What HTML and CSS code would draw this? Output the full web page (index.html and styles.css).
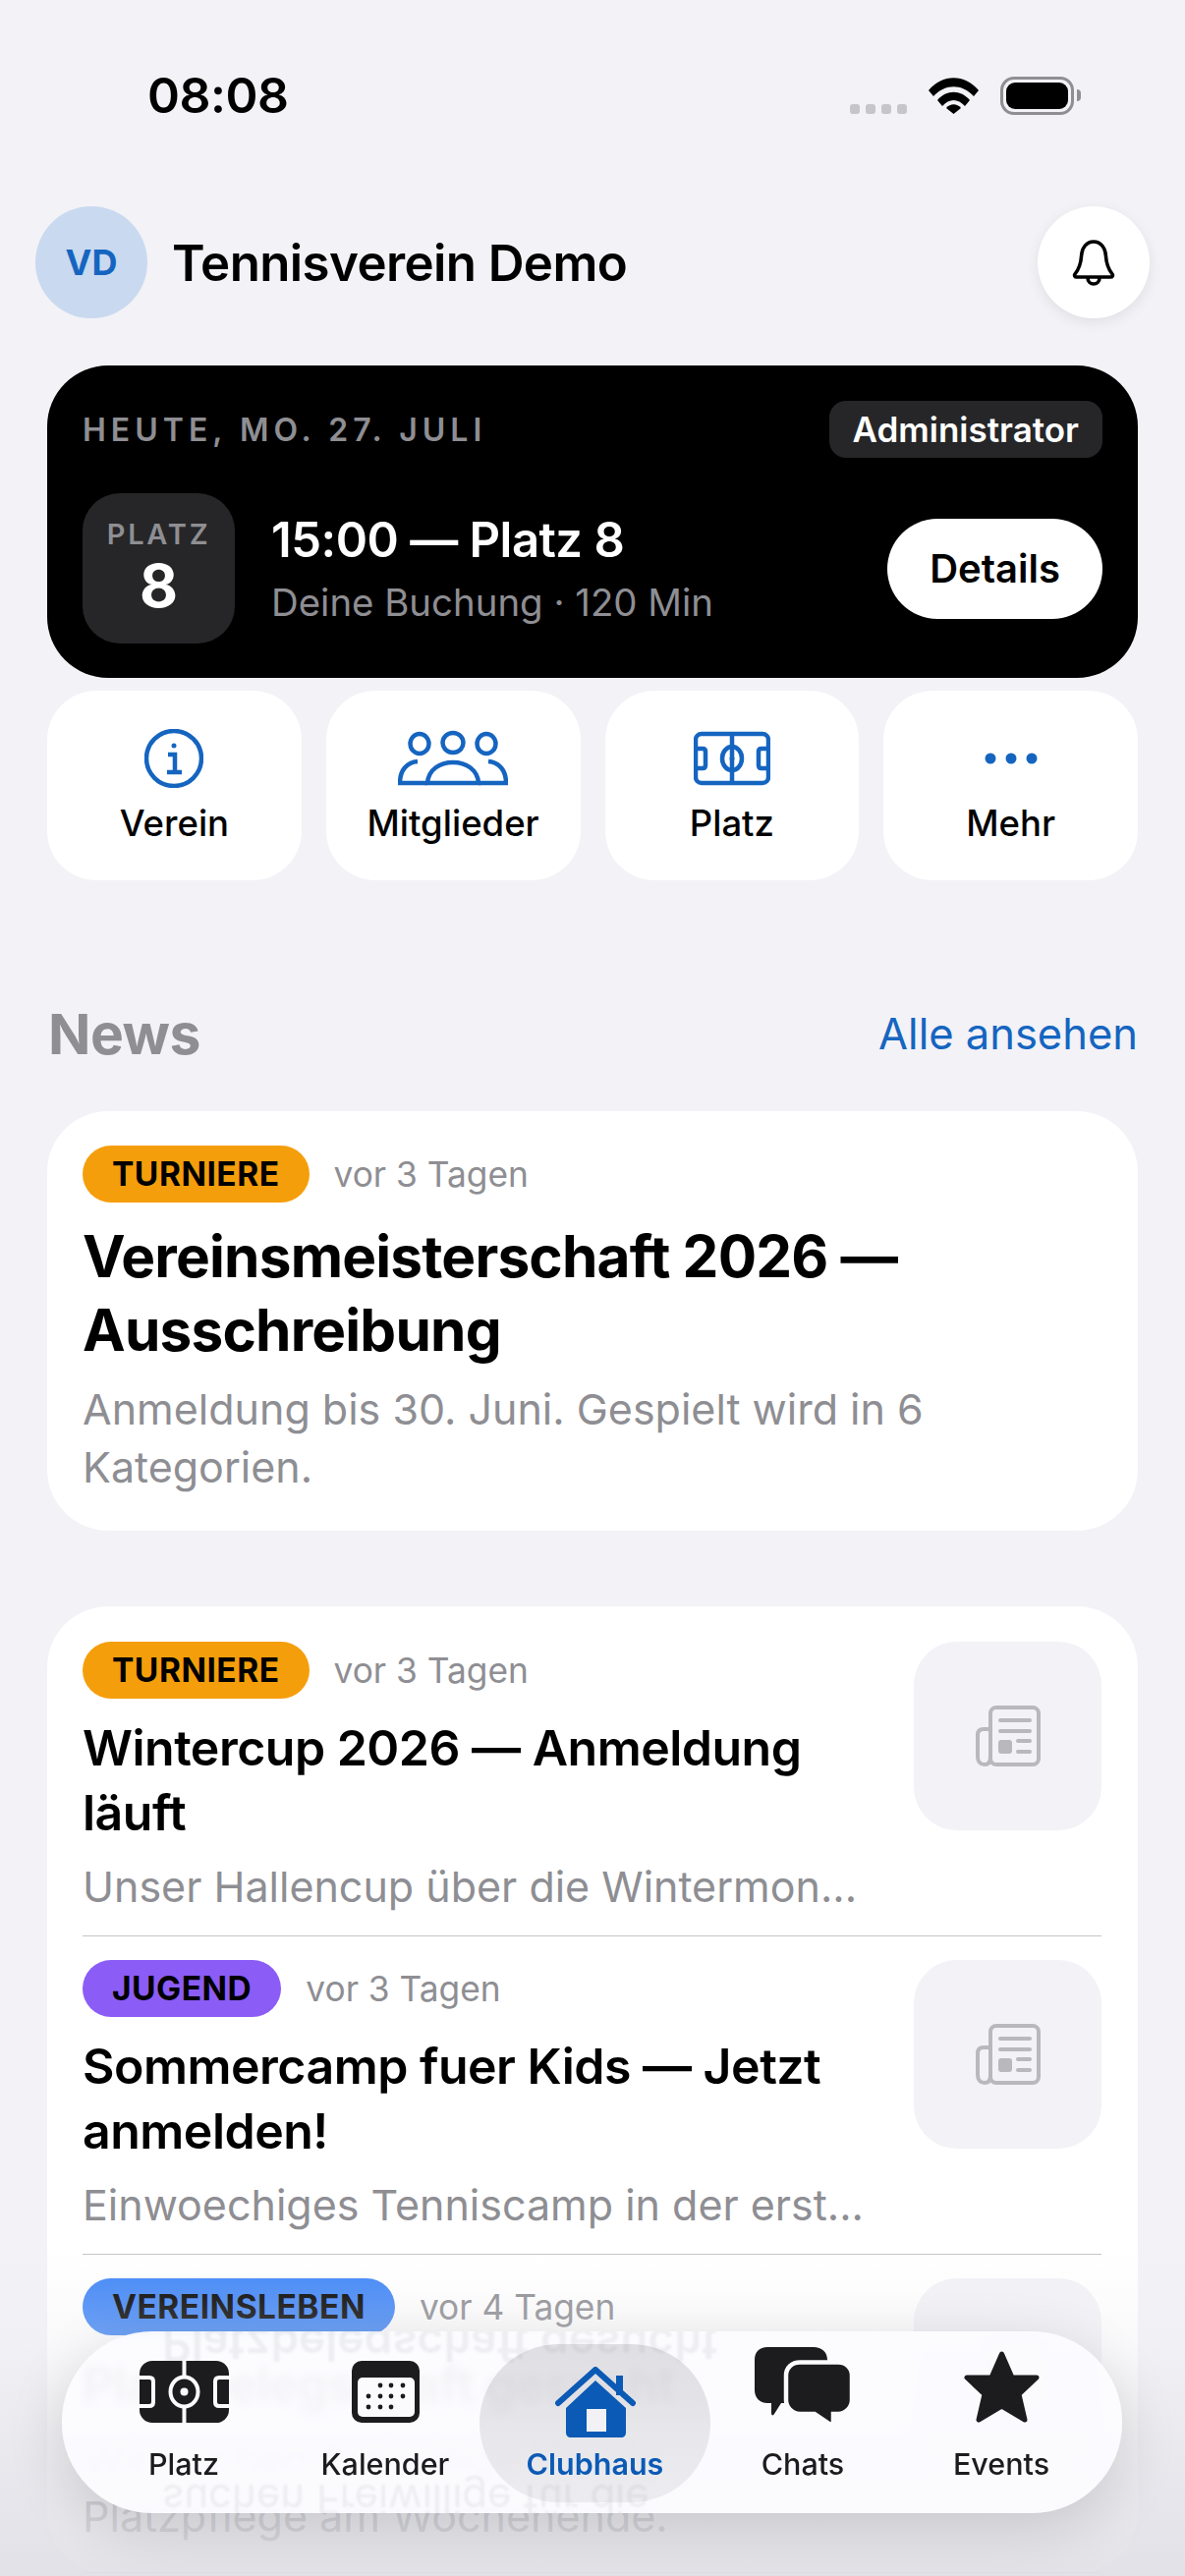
FILE: index.html
```html
<!DOCTYPE html>
<html lang="de">
<head>
  <meta charset="UTF-8">
  <title>Tennisverein Demo</title>
  <link rel="stylesheet" href="styles.css">
</head>
<body>
  <div class="screen">
    <div class="status">
      <span class="clock">08:08</span>
      <div class="status-icons">
        <div class="signal"><i></i><i></i><i></i><i></i></div>
        <svg class="wifi" viewBox="0 0 51 37"><path d="M0 13 C14 -4 37 -4 51 13 L46 19 C34 6 17 6 5 19 Z"/><path d="M9 23 C18 12 33 12 42 23 L37 29 C30 21 21 21 14 29 Z"/><path d="M18 31 C22 26 29 26 33 31 L25.500 37 Z"/></svg>
        <div class="battery"><b></b></div>
      </div>
    </div>

    <!-- Kopfzeile -->
    <header class="top">
      <div class="avatar">VD</div>
      <h1>Tennisverein Demo</h1>
      <button class="bell">
        <svg viewBox="0 0 44 48" width="44" height="48"><path d="M22 3 C14 3 10 10 9.500 18 C9 26 7 31 3 36 C2 37.500 3 39 4.500 39 H39.500 C41 39 42 37.500 41 36 C37 31 35 26 34.500 18 C34 10 30 3 22 3 Z M16 40 C16 48 28 48 28 40" fill="none" stroke="#000" stroke-width="3.600" stroke-linejoin="round"/></svg>
      </button>
    </header>

    <section class="hero">
      <div class="hero-top">
        <span class="hero-date">HEUTE, MO. 27. JULI</span>
        <span class="role">Administrator</span>
      </div>
      <div class="hero-main">
        <div class="court"><small>PLATZ</small><strong>8</strong></div>
        <div class="hero-text">
          <div class="hero-title">15:00 — Platz 8</div>
          <div class="hero-sub">Deine Buchung · 120 Min</div>
        </div>
        <button class="details">Details</button>
      </div>
    </section>

    <nav class="quick">
      <a class="tile">
        <svg viewBox="0 0 60 60" width="60" class="blue-line"><circle cx="30" cy="30" r="28"/><path d="M24 26 H31 V44 M23 44 H38"/><circle cx="30" cy="17" r="2.500" class="dot"/></svg>
        <span>Verein</span>
      </a>
      <a class="tile">
        <svg viewBox="0 0 112 54" width="112" class="blue-line"><ellipse cx="22" cy="12" rx="9.500" ry="10"/><ellipse cx="56" cy="11" rx="10.500" ry="10"/><ellipse cx="90" cy="12" rx="9.500" ry="10"/><path d="M30 52 C31 38 43 31 56 31 C69 31 81 38 82 52 Z"/><path d="M20 30 C9 31 2 39 2 52 H30"/><path d="M92 30 C103 31 110 39 110 52 H82"/></svg>
        <span>Mitglieder</span>
      </a>
      <a class="tile">
        <svg viewBox="0 0 78 54" width="78" class="blue-line"><rect x="2" y="2" width="74" height="50" rx="6"/><path d="M39 2 V52 M2 17 H9 C11 17 12 18 12 20 V34 C12 36 11 37 9 37 H2 M76 17 H69 C67 17 66 18 66 20 V34 C66 36 67 37 69 37 H76"/><ellipse cx="39" cy="27" rx="10" ry="12"/><circle cx="39" cy="27" r="2.500" class="dot"/></svg>
        <span>Platz</span>
      </a>
      <a class="tile">
        <svg viewBox="0 0 60 60" width="60"><circle cx="9" cy="30" r="5.500" fill="#1565c0"/><circle cx="30" cy="30" r="5.500" fill="#1565c0"/><circle cx="51" cy="30" r="5.500" fill="#1565c0"/></svg>
        <span>Mehr</span>
      </a>
    </nav>

    <div class="news-head">
      <h2>News</h2>
      <a>Alle ansehen</a>
    </div>

    <article class="card featured">
      <div class="meta"><span class="tag orange">TURNIERE</span><span class="ago">vor 3 Tagen</span></div>
      <h3>Vereinsmeisterschaft 2026 — Ausschreibung</h3>
      <p>Anmeldung bis 30. Juni. Gespielt wird in 6 Kategorien.</p>
    </article>

    <section class="card list">
      <article class="row">
        <div class="row-text">
          <div class="meta"><span class="tag orange">TURNIERE</span><span class="ago">vor 3 Tagen</span></div>
          <h4>Wintercup 2026 — Anmeldung läuft</h4>
          <p>Unser Hallencup über die Wintermon...</p>
        </div>
        <div class="thumb"><svg viewBox="0 0 66 62" width="66" height="62"><use href="#paper"/></svg></div>
      </article>
      <article class="row">
        <div class="row-text">
          <div class="meta"><span class="tag purple">JUGEND</span><span class="ago">vor 3 Tagen</span></div>
          <h4>Sommercamp fuer Kids — Jetzt anmelden!</h4>
          <p>Einwoechiges Tenniscamp in der erst...</p>
        </div>
        <div class="thumb"><svg viewBox="0 0 66 62" width="66" height="62"><use href="#paper"/></svg></div>
      </article>
      <article class="row">
        <div class="row-text">
          <div class="meta"><span class="tag blue">VEREINSLEBEN</span><span class="ago">vor 4 Tagen</span></div>
          <h4>Platzbelegschaft gesucht</h4>
          <p class="two-lines">Wir suchen Freiwillige für die Platzpflege am Wochenende.</p>
        </div>
        <div class="thumb"><svg viewBox="0 0 66 62" width="66" height="62"><use href="#paper"/></svg></div>
      </article>
    </section>

    <div class="fade"></div>

    <nav class="tabbar">
      <a class="tab">
        <svg viewBox="0 0 91 63" width="91" height="63"><rect width="91" height="63" rx="13" fill="#1c1c1e"/><path d="M45.500 0 V63 M0 17 H10 C12.500 17 14 18.500 14 21 V42 C14 44.500 12.500 46 10 46 H0 M91 17 H81 C78.500 17 77 18.500 77 21 V42 C77 44.500 78.500 46 81 46 H91" fill="none" stroke="#fbfbfe" stroke-width="4"/><ellipse cx="45.500" cy="31.500" rx="14" ry="15" fill="#1c1c1e" stroke="#fbfbfe" stroke-width="4"/><circle cx="45.500" cy="31.500" r="4" fill="#fbfbfe"/></svg>
        <span>Platz</span>
      </a>
      <a class="tab">
        <svg viewBox="0 0 69 63" width="69" height="63"><rect width="69" height="63" rx="10" fill="#1c1c1e"/><rect x="6" y="17" width="58" height="40" rx="5" fill="#fbfbfe"/><g fill="#1c1c1e"><circle cx="29" cy="25" r="2.400"/><circle cx="40" cy="25" r="2.400"/><circle cx="52" cy="25" r="2.400"/><circle cx="17" cy="36" r="2.400"/><circle cx="29" cy="36" r="2.400"/><circle cx="40" cy="36" r="2.400"/><circle cx="52" cy="36" r="2.400"/><circle cx="17" cy="47" r="2.400"/><circle cx="29" cy="47" r="2.400"/><circle cx="40" cy="47" r="2.400"/></g></svg>
        <span>Kalender</span>
      </a>
      <a class="tab active">
        <svg viewBox="0 0 82 72" width="82" height="72"><path d="M3 37 L41 3 L79 37" fill="none" stroke="#0b5ab5" stroke-width="6" stroke-linecap="round" stroke-linejoin="round"/><rect x="62" y="9" width="7" height="20" fill="#0b5ab5"/><path d="M41 14 L72 42 V67 C72 70 70 72 67 72 H16 C13 72 11 70 11 67 V42 Z" fill="#0b5ab5"/><rect x="32" y="43" width="20" height="23" fill="#f2f2f6"/></svg>
        <span>Clubhaus</span>
      </a>
      <a class="tab">
        <svg viewBox="0 0 98 77" width="98" height="77"><path d="M13 0 H60 C68 0 74 5 74 13 V45 C74 52 68 57 60 57 H27 L20 68 C19 70 17 70 17 67 V57 H13 C5 57 0 51 0 44 V13 C0 5 5 0 13 0 Z" fill="#1c1c1e"/><path d="M47 14.500 H86 C94 14.500 100 20 100 28 V53 C100 60 94 67 86 67 H81 V76 C81 78 79 78 77 77 L62 67 H47 C39 67 33 60 33 53 V28 C33 20 39 14.500 47 14.500 Z" fill="#1c1c1e" stroke="#fbfbfe" stroke-width="4.500" transform="translate(-1 1)"/></svg>
        <span>Chats</span>
      </a>
      <a class="tab">
        <svg viewBox="0 0 77 73" width="77" height="73"><path d="M38.500 3 L49 27 H74 L56 44 L62 70 L38.500 56 L15 70 L21 44 L3 27 H28 Z" fill="#1c1c1e" stroke="#1c1c1e" stroke-width="5" stroke-linejoin="round"/></svg>
        <span>Events</span>
      </a>
    </nav>
  </div>

  <!-- Zeitungs-Symbol fuer die Vorschaubilder -->
  <svg class="defs" width="0" height="0">
    <symbol id="paper" viewBox="0 0 66 62">
      <g fill="none" stroke="#b8b8bd" stroke-width="4" stroke-linecap="round">
        <rect x="15" y="2" width="49" height="58" rx="6"/>
        <path d="M15 24 H8 C4 24 2 26 2 30 V52 C2 57 5 60 9 60 C13 60 15 57 15 52"/>
        <path d="M25 15 H55 M25 26 H55 M43 36 H55 M43 47 H55"/>
      </g>
      <rect x="23" y="35" width="14" height="14" rx="3" fill="#b8b8bd"/>
    </symbol>
  </svg>
</body>
</html>
```

FILE: styles.css
```css
* {
  box-sizing: border-box;
}

body {
  font-family: Inter, 'Noto Sans', sans-serif;
  margin: 0;
  padding: 0;
  background-color: #f2f2f7;
  color: #000;
}

h1, h2, h3, h4, p {
  margin: 0;
}

button {
  font-family: inherit;
  border: none;
  padding: 0;
}

.screen {
  position: relative;
  height: 2622px;
  padding-top: 59px;
  overflow: hidden;
}

.defs {
  position: absolute;
}

/* Statusleiste */
.status {
  display: flex;
  justify-content: space-between;
  align-items: center;
  height: 76px;
  padding: 0 113px 0 150px;
}

.clock {
  font-size: 50px;
  font-weight: 600;
  letter-spacing: -0.5px;
}

.status-icons {
  display: flex;
  align-items: center;
  height: 39px;
}

.signal {
  display: flex;
  gap: 6px;
  align-self: flex-end;
  margin-right: 22px;
  margin-bottom: 1px;
}

.signal i {
  width: 10px;
  height: 10px;
  border-radius: 3px;
  background-color: #c5c5ca;
}

.wifi {
  width: 51px;
  height: 37px;
  margin-right: 22px;
}

.battery {
  position: relative;
  width: 75px;
  height: 39px;
  padding: 3px;
  border: 3px solid #8e8e93;
  border-radius: 14px;
}

.battery b {
  display: block;
  height: 100%;
  background-color: #000;
  border-radius: 9px;
}

.battery::after {
  content: "";
  position: absolute;
  top: 10px;
  right: -10px;
  width: 4px;
  height: 12px;
  background-color: #8e8e93;
  border-radius: 0 6px 6px 0;
}

/* Kopfzeile */
.top {
  display: flex;
  align-items: center;
  height: 114px;
  margin-top: 75px;
  padding: 0 36px;
}

.avatar {
  display: flex;
  align-items: center;
  justify-content: center;
  width: 114px;
  height: 114px;
  border-radius: 50%;
  background-color: #c9d9ef;
  color: #1565c0;
  font-size: 36px;
  font-weight: 700;
}

h1 {
  flex: 1;
  margin-left: 25px;
  font-size: 51px;
  font-weight: 600;
  letter-spacing: -0.6px;
}

.bell {
  display: flex;
  align-items: center;
  justify-content: center;
  width: 114px;
  height: 114px;
  border-radius: 50%;
  background-color: #fff;
  box-shadow: 0 4px 14px rgba(0, 0, 0, 0.08);
}

/* Heute-Karte */
.hero {
  height: 318px;
  margin: 48px 48px 0;
  padding: 36px;
  background-color: #000;
  border-radius: 62px;
}

.hero-top {
  display: flex;
  justify-content: space-between;
  align-items: center;
}

.hero-date {
  color: #8e8e93;
  font-size: 32px;
  font-weight: 600;
  letter-spacing: 5px;
}

.role {
  display: flex;
  align-items: center;
  height: 58px;
  padding: 0 24px;
  background-color: #262628;
  border-radius: 17px;
  color: #fff;
  font-size: 35px;
  font-weight: 600;
}

.hero-main {
  display: flex;
  align-items: center;
  margin-top: 36px;
}

.court {
  display: flex;
  flex-direction: column;
  align-items: center;
  justify-content: center;
  width: 155px;
  height: 153px;
  background-color: #262628;
  border-radius: 38px;
}

.court small {
  color: #8e8e93;
  font-size: 29px;
  font-weight: 600;
  letter-spacing: 2.800px;
}

.court strong {
  color: #fff;
  font-size: 60px;
  font-weight: 700;
  line-height: 70px;
}

.hero-text {
  flex: 1;
  margin-left: 37px;
}

.hero-title {
  color: #fff;
  font-size: 49px;
  font-weight: 600;
  letter-spacing: -0.5px;
  line-height: 60px;
}

.hero-sub {
  margin-top: 9px;
  color: #8e8e93;
  font-size: 38.400px;
  line-height: 48px;
}

.details {
  width: 219px;
  height: 102px;
  background-color: #fff;
  border-radius: 51px;
  color: #000;
  font-size: 40px;
  font-weight: 600;
}

/* Schnellzugriff */
.quick {
  display: grid;
  grid-template-columns: repeat(4, 1fr);
  gap: 25px;
  margin: 13px 48px 0;
}

.tile {
  display: flex;
  flex-direction: column;
  align-items: center;
  height: 193px;
  padding-top: 39px;
  background-color: #fff;
  border-radius: 50px;
  font-size: 36.500px;
  font-weight: 500;
}

.tile svg {
  flex: none;
  height: 60px;
}

.tile span {
  margin-top: 14px;
  line-height: 44px;
}

.blue-line {
  fill: none;
  stroke: #1565c0;
  stroke-width: 4.500;
}

.blue-line .dot {
  fill: #1565c0;
  stroke: none;
}

/* News */
.news-head {
  display: flex;
  justify-content: space-between;
  align-items: center;
  height: 70px;
  margin: 121px 48px 0 49px;
}

h2 {
  color: #8e8e93;
  font-size: 57px;
  font-weight: 700;
  letter-spacing: -0.5px;
}

.news-head a {
  color: #1565c0;
  font-size: 43.500px;
}

.card {
  margin: 0 48px;
  background-color: #fff;
  border-radius: 62px;
}

.meta {
  display: flex;
  align-items: center;
  gap: 25px;
  height: 58px;
}

.tag {
  display: flex;
  align-items: center;
  height: 58px;
  padding: 0 30px;
  border-radius: 29px;
  font-size: 33.500px;
  font-weight: 700;
  letter-spacing: 0.5px;
}

.orange {
  background-color: #f59e0b;
}

.purple {
  background-color: #8b5cf6;
}

.blue {
  background-color: #3f85f6;
}

.ago {
  color: #8e8e93;
  font-size: 35.300px;
}

.featured {
  height: 427px;
  margin-top: 44px;
  padding: 35px 36px 33px;
}

.featured h3 {
  margin-top: 17px;
  font-size: 58.500px;
  font-weight: 700;
  letter-spacing: -0.8px;
  line-height: 75px;
}

.featured p {
  margin-top: 14px;
  color: #8e8e93;
  font-size: 43px;
  line-height: 59px;
}

.list {
  margin-top: 77px;
  padding: 12px 37px 0 36px;
}

.row {
  display: flex;
  justify-content: space-between;
  height: 324px;
  padding-top: 24px;
  border-bottom: 1px solid #c6c6c8;
}

.row-text {
  width: 800px;
}

.row h4 {
  margin-top: 17px;
  font-size: 50px;
  font-weight: 600;
  letter-spacing: -0.5px;
  line-height: 66px;
}

.row p {
  margin-top: 13px;
  color: #8e8e93;
  font-size: 43px;
  line-height: 58px;
  white-space: nowrap;
}

.row p.two-lines {
  margin-top: 14px;
  white-space: normal;
}

.thumb {
  display: flex;
  align-items: center;
  justify-content: center;
  width: 191px;
  height: 192px;
  background-color: #f2f2f7;
  border-radius: 44px;
}

/* Abdunkelung am unteren Rand */
.fade {
  position: absolute;
  left: 0;
  right: 0;
  bottom: 0;
  height: 330px;
  background: linear-gradient(to bottom, rgba(242, 242, 247, 0), rgba(236, 236, 241, 0.3) 28%, rgba(226, 226, 232, 0.75) 75%, rgba(224, 224, 230, 0.92));
}

/* Tableiste */
.tabbar {
  position: absolute;
  left: 63px;
  top: 2373px;
  display: grid;
  grid-template-columns: 208px 202px 228px 192px 212px;
  width: 1079px;
  height: 185px;
  padding: 13px 20px 11px;
  overflow: hidden;
  background-color: rgba(252, 252, 255, 0.94);
  backdrop-filter: blur(4px);
  border-radius: 92px;
  box-shadow: 0 16px 60px rgba(0, 0, 0, 0.14);
}

/* Spiegelung des Inhalts am Glasrand */
.tabbar::before,
.tabbar::after {
  position: absolute;
  left: 102px;
  color: rgba(60, 60, 67, 0.07);
  white-space: nowrap;
  transform: scaleY(-1);
  filter: blur(1px);
}

.tabbar::before {
  content: "Platzbelegschaft gesucht";
  top: -14px;
  font-size: 46px;
  font-weight: 600;
}

.tabbar::after {
  content: "suchen Freiwillige für die";
  top: 146px;
  font-size: 42px;
}

.tab {
  position: relative;
  display: flex;
  flex-direction: column;
  align-items: center;
  color: #1c1c1e;
  font-size: 30.500px;
  font-weight: 500;
}

.tab svg {
  position: absolute;
  bottom: 81px;
}

.tab span {
  position: absolute;
  top: 103px;
}

.tab.active {
  margin: 0 -2px 0 -5px;
  background: linear-gradient(to bottom, rgba(120, 120, 128, 0.22), rgba(120, 120, 128, 0.11));
  border-radius: 82px;
  color: #0b5ab5;
  font-weight: 600;
}

.tab.active svg {
  bottom: 66px;
}
```
